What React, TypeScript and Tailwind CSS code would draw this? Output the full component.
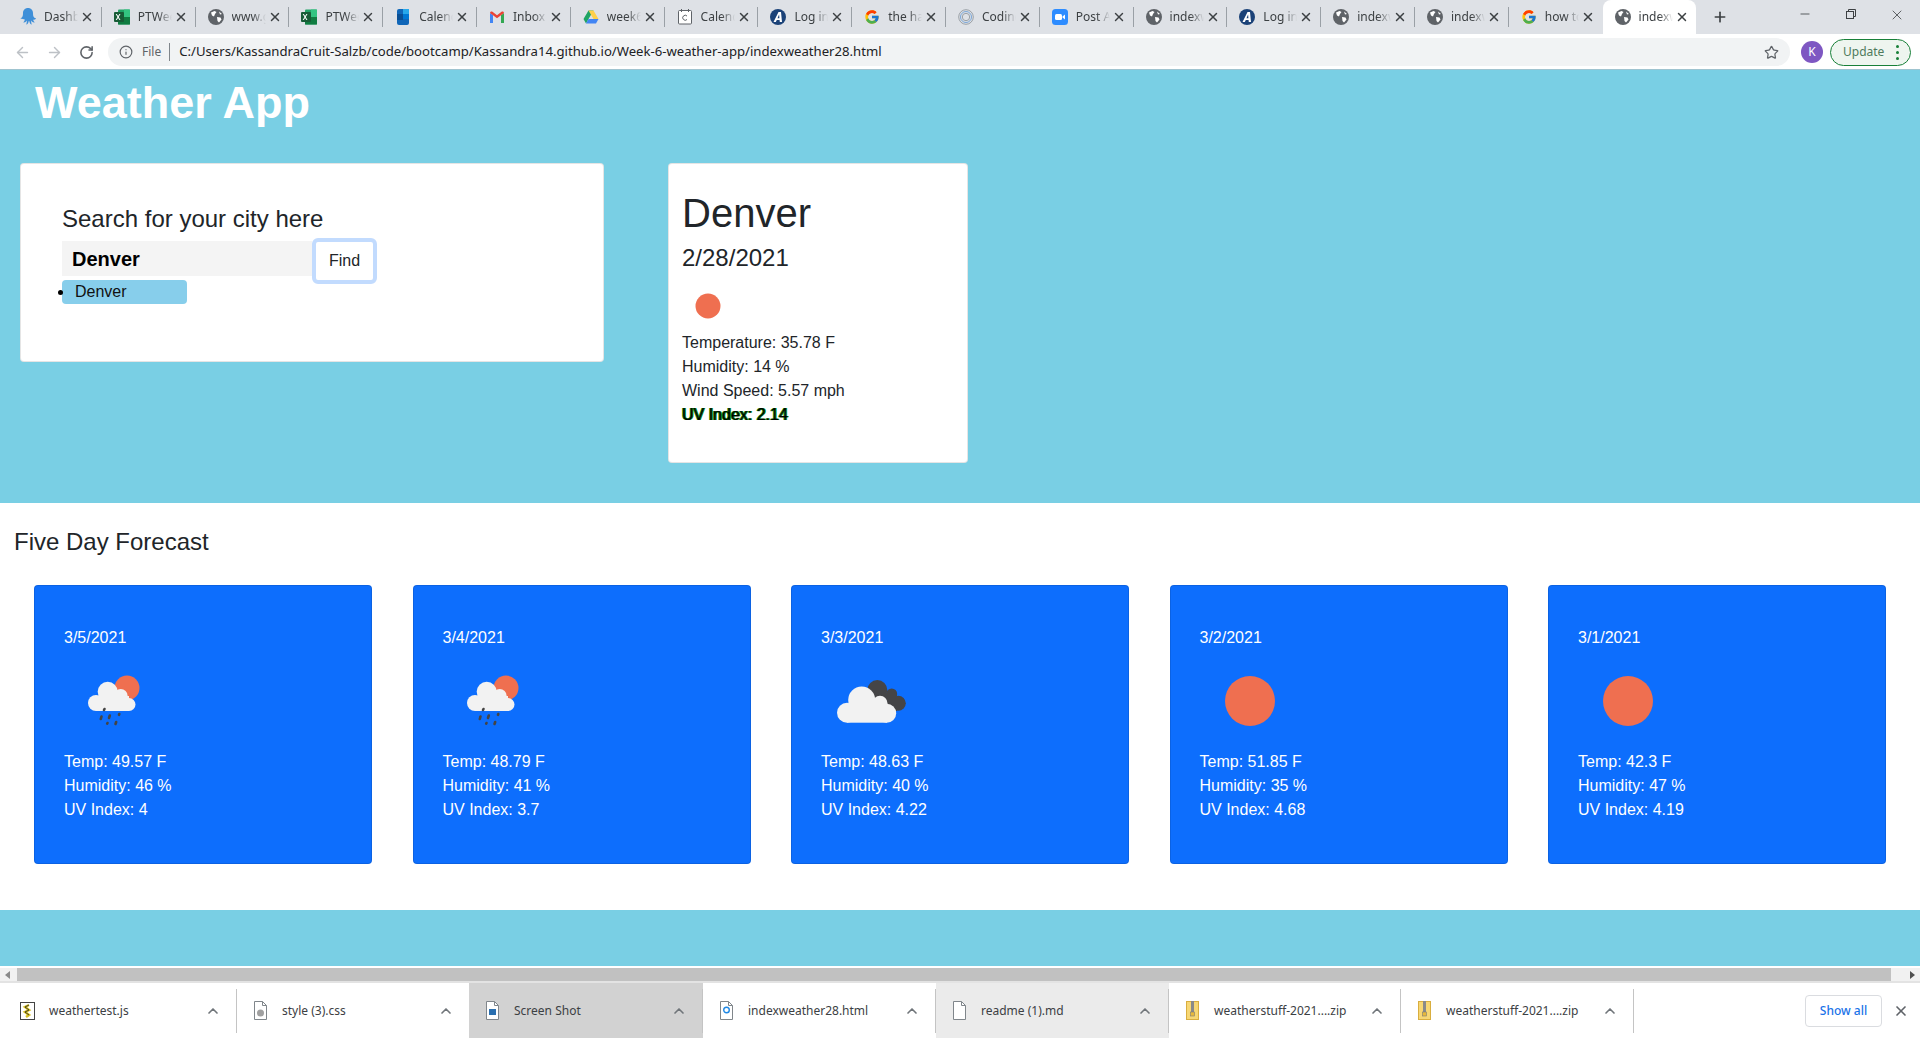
import { FcGoogle } from 'react-icons/fc'
import { ArrowLeft, ArrowRight, ChevronUp, Info, Minus, Plus, RotateCw, Star, X } from 'lucide-react'

function Globe() {
  return (
    <svg width="16" height="16" viewBox="0 0 16 16" aria-hidden="true">
      <circle cx="8" cy="8" r="8" fill="#5f6368" />
      <path d="M3 3.5 6.5 2l2 1-1.5 2-1 2.500-2-1zM9 8l3.500.5 1 2-2.500 3-1.500-1.500zM11 2.500 14 5l-2 .5z" fill="#fff" />
    </svg>
  )
}

function Octo() {
  return (
    <svg width="16" height="18" viewBox="0 0 16 18" aria-hidden="true">
      <path d="M8 0c3 0 5 2.200 5 5 0 2 .3 3.500 1.200 4.500.7.800 1.300.8 1.800.6-.2 1.400-1.500 2-2.800 1.500.2 1.300.8 2.200 1.500 2.800-1.300.4-2.700-.3-3.400-1.800-.2 1.500-.1 2.800.5 4-1.300-.2-2.300-1.500-2.400-3.400h-.8c-.1 1.900-1.100 3.200-2.400 3.400.6-1.200.7-2.500.5-4-.7 1.500-2.100 2.200-3.400 1.800.7-.6 1.300-1.500 1.500-2.800C2 11.100.2 10.500 0 10.100c.5.200 1.100.2 1.800-.6C2.700 8.500 3 7 3 5c0-2.800 2-5 5-5z" fill="#3f8fd8" />
    </svg>
  )
}

function Excel() {
  return (
    <svg width="16" height="16" viewBox="0 0 16 16" aria-hidden="true">
      <rect x="4" y="0.500" width="12" height="15" rx="1" fill="#21a366" />
      <rect x="10" y="0.500" width="6" height="7.500" fill="#33c481" />
      <rect x="4" y="8" width="12" height="7.500" fill="#107c41" />
      <rect x="0" y="3" width="10" height="10" rx="1" fill="#185c37" />
      <path d="m2.800 5 1.300 2.100L5.400 5h1.100L4.700 8l1.800 3H5.400L4.100 8.900 2.800 11H1.700l1.800-3-1.800-3z" fill="#fff" />
    </svg>
  )
}

function Outlook() {
  return (
    <svg width="16" height="16" viewBox="0 0 16 16" aria-hidden="true">
      <rect x="2" y="0" width="12" height="16" rx="2" fill="#1066b8" />
      <rect x="8" y="0" width="6" height="5" fill="#28a8ea" />
      <rect x="8" y="5" width="6" height="5" fill="#0078d4" />
      <rect x="2" y="5" width="6" height="6" fill="#0a4f94" />
    </svg>
  )
}

function Gmail() {
  return (
    <svg width="16" height="16" viewBox="0 0 16 16" aria-hidden="true">
      <path d="M1 14V4l3 2.300V14z" fill="#4285f4" />
      <path d="M12 14V6.300L15 4v10z" fill="#34a853" />
      <path d="M1 4c0-1.500 1.500-2 2.500-1.200L8 6.300l4.500-3.500C13.500 2 15 2.500 15 4l-3 2.300L8 9.300 4 6.300z" fill="#ea4335" />
    </svg>
  )
}

function Drive() {
  return (
    <svg width="16" height="16" viewBox="0 0 16 16" aria-hidden="true">
      <path d="M5.500 1.500h5L5.500 10 3 14.500.5 10z" fill="#1fa463" />
      <path d="M10.500 1.500 15.500 10h-5L8 5.800 5.500 1.500z" fill="#ffd04b" />
      <path d="M5.500 10h10L13 14.500H3z" fill="#4285f4" />
    </svg>
  )
}

function Cal() {
  return (
    <svg width="16" height="16" viewBox="0 0 16 16" aria-hidden="true">
      <rect x="1.500" y="1.500" width="13" height="13.500" rx="1" fill="#fff" stroke="#5f6368" />
      <rect x="4" y="0" width="1" height="3" fill="#5f6368" />
      <rect x="11" y="0" width="1" height="3" fill="#5f6368" />
      <path d="M10 7a2.500 2.500 0 1 0 0 3.500" fill="none" stroke="#5f6368" />
    </svg>
  )
}

function Auth() {
  return (
    <svg width="16" height="16" viewBox="0 0 16 16" aria-hidden="true">
      <circle cx="8" cy="8" r="8" fill="#1b4278" />
      <path d="M8.500 3H11l1 10H9.800l-.2-2H6.800l-1 2H3.500zm.9 6.300L9.100 5.500 7.500 9.300z" fill="#fff" />
    </svg>
  )
}

function Coding() {
  return (
    <svg width="16" height="16" viewBox="0 0 16 16" fill="none" aria-hidden="true">
      <circle cx="8" cy="8" r="7.300" stroke="#9aa0a6" />
      <circle cx="8" cy="8" r="5.500" stroke="#7aa6d8" />
      <circle cx="8" cy="8" r="3.700" stroke="#9aa0a6" />
    </svg>
  )
}

function Zoom() {
  return (
    <svg width="16" height="16" viewBox="0 0 16 16" aria-hidden="true">
      <rect width="16" height="16" rx="3.500" fill="#2d8cff" />
      <rect x="3" y="5" width="7" height="6" rx="1.500" fill="#fff" />
      <path d="m10.500 7.500 2.500-2v5l-2.500-2z" fill="#fff" />
    </svg>
  )
}

const tabs = [
  { icon: <Octo />, title: 'Dashboard' },
  { icon: <Excel />, title: 'PTWeek' },
  { icon: <Globe />, title: 'www.google' },
  { icon: <Excel />, title: 'PTWeek' },
  { icon: <Outlook />, title: 'Calendar' },
  { icon: <Gmail />, title: 'Inbox' },
  { icon: <Drive />, title: 'week6' },
  { icon: <Cal />, title: 'Calendar' },
  { icon: <Auth />, title: 'Log in' },
  { icon: <FcGoogle size={16} />, title: 'the hard' },
  { icon: <Coding />, title: 'Coding' },
  { icon: <Zoom />, title: 'Post A' },
  { icon: <Globe />, title: 'indexw' },
  { icon: <Auth />, title: 'Log in' },
  { icon: <Globe />, title: 'indexw' },
  { icon: <Globe />, title: 'indexw' },
  { icon: <FcGoogle size={16} />, title: 'how to' },
  { icon: <Globe />, title: 'indexw', active: true },
]

function TabStrip() {
  return (
    <div className="flex h-[34px] items-stretch bg-[#dee1e6] pl-[8px]">
      {tabs.map((t, i) => (
        <div
          key={i}
          className={
            t.active
              ? 'flex w-[93.800px] shrink-0 items-center rounded-t-[8px] bg-white pl-[12px]'
              : 'flex w-[93.800px] shrink-0 items-center pl-[12px]'
          }
        >
          <span className="flex w-[16px] shrink-0 justify-center">{t.icon}</span>
          <span className="ml-[8px] w-[34px] shrink-0 overflow-hidden whitespace-nowrap text-[12px] text-[#3c4043] [mask-image:linear-gradient(to_right,#000_60%,transparent)]">
            {t.title}
          </span>
          <X size={14} strokeWidth={2.5} className="ml-[2px] shrink-0 text-[#3c4043]" />
          {!t.active && i < tabs.length - 2 && <span className="ml-auto h-[20px] w-px bg-[#9aa0a6]" />}
        </div>
      ))}
      <div className="ml-[16px] flex items-center">
        <Plus size={16} strokeWidth={2.5} className="text-[#3c4043]" />
      </div>
      <div className="ml-auto flex items-start pt-[7px] text-[#3c4043]">
        <span className="flex w-[46px] justify-center">
          <Minus size={14} strokeWidth={1.400} />
        </span>
        <span className="flex w-[46px] justify-center">
          <svg width="14" height="14" viewBox="0 0 14 14" fill="none" stroke="currentColor" aria-hidden="true">
            <rect x="2.500" y="4.500" width="7" height="7" />
            <path d="M4.500 4.500v-2h7v7h-2" />
          </svg>
        </span>
        <span className="flex w-[46px] justify-center">
          <X size={16} strokeWidth={1.200} />
        </span>
      </div>
    </div>
  )
}

function Toolbar() {
  return (
    <div className="flex h-[36px] items-center border-b border-[#9fc4d0] bg-white pt-px">
      <div className="flex w-[108px] items-center pl-[14px]">
        <ArrowLeft size={17} className="text-[#bdc1c6]" />
        <ArrowRight size={17} className="ml-[15px] text-[#bdc1c6]" />
        <RotateCw size={15} strokeWidth={2.500} className="ml-[16px] text-[#5f6368]" />
      </div>
      <div className="flex h-[28px] w-[1682px] items-center rounded-full bg-[#f1f3f4] pl-[11px] pr-[11px]">
        <Info size={14} className="text-[#5f6368]" />
        <span className="ml-[9px] text-[12px] text-[#5f6368]">File</span>
        <span className="ml-[8px] h-[18px] w-px bg-[#80868b]" />
        <span className="ml-[9px] whitespace-nowrap text-[13.150px] text-[#202124]">
          C:/Users/KassandraCruit-Salzb/code/bootcamp/Kassandra14.github.io/Week-6-weather-app/indexweather28.html
        </span>
        <Star size={15} className="ml-auto text-[#5f6368]" />
      </div>
      <span className="ml-[11px] flex size-[22px] items-center justify-center rounded-full bg-[#7e57c2] text-[12px] text-white">K</span>
      <div className="ml-[7px] flex h-[27px] w-[81px] items-center justify-between rounded-full border border-[#188038] bg-[#eef5ef] pl-[12px] pr-[11px]">
        <span className="text-[12px] text-[#4f7a5c]">Update</span>
        <span className="flex flex-col gap-[3px]">
          <span className="size-[3px] rounded-full bg-[#188038]" />
          <span className="size-[3px] rounded-full bg-[#188038]" />
          <span className="size-[3px] rounded-full bg-[#188038]" />
        </span>
      </div>
    </div>
  )
}

function SunIcon({ size }: { size: number }) {
  return (
    <svg width={size} height={size} viewBox="0 0 100 100" aria-hidden="true">
      <circle cx="50" cy="50" r="25" fill="#ef6f50" />
    </svg>
  )
}

function RainIcon() {
  return (
    <svg width="100" height="100" viewBox="0 0 100 100" aria-hidden="true">
      <circle cx="63" cy="37" r="12.500" fill="#ef6f50" />
      <g fill="#f2f2f2">
        <circle cx="43.700" cy="40.700" r="10" />
        <circle cx="56.700" cy="45" r="7" />
        <circle cx="32" cy="52" r="8" />
        <circle cx="65" cy="53.500" r="6.500" />
        <rect x="32" y="45" width="33" height="15" />
      </g>
      <g stroke="#444" strokeWidth="2.600" strokeLinecap="round">
        <path d="M40.500 58 40 59" />
        <path d="M37.500 65.500 36.800 68" />
        <path d="M45.800 64.500 45 67" />
        <path d="M55.300 63 55 63.800" />
        <path d="M43.500 72 43.200 72.600" />
        <path d="M52.200 71 51.500 73" />
      </g>
    </svg>
  )
}

function CloudIcon() {
  return (
    <svg width="100" height="100" viewBox="0 0 100 100" aria-hidden="true">
      <g fill="#454547">
        <circle cx="56.300" cy="39" r="10" />
        <circle cx="70.700" cy="43" r="5.500" />
        <circle cx="77.300" cy="52.300" r="7.500" />
        <rect x="56" y="42" width="20" height="18" />
      </g>
      <g fill="#f2f2f2">
        <circle cx="40.700" cy="49" r="13.500" />
        <circle cx="59" cy="52.300" r="7.500" />
        <circle cx="26" cy="61.700" r="10" />
        <circle cx="65.700" cy="62.200" r="9.500" />
        <rect x="26" y="55" width="40" height="16.700" />
      </g>
    </svg>
  )
}

const forecast = [
  { date: '3/5/2021', icon: <RainIcon />, temp: '49.57', hum: 46, uv: '4' },
  { date: '3/4/2021', icon: <RainIcon />, temp: '48.79', hum: 41, uv: '3.7' },
  { date: '3/3/2021', icon: <CloudIcon />, temp: '48.63', hum: 40, uv: '4.22' },
  { date: '3/2/2021', icon: <SunIcon size={100} />, temp: '51.85', hum: 35, uv: '4.68' },
  { date: '3/1/2021', icon: <SunIcon size={100} />, temp: '42.3', hum: 47, uv: '4.19' },
]

function Hero() {
  return (
    <section className="h-[433px] bg-[#79cfe4] pl-[20px]">
      <h1 className="pl-[15px] pt-[3px] text-[45px] font-bold leading-[60px] text-white">Weather App</h1>
      <div className="mt-[30px] flex items-start">
        <div className="h-[199px] w-[584px] rounded-[4px] border border-black/10 bg-white pl-[41px] pt-[40px]">
          <p className="text-[24px] leading-[30px] text-[#212529]">Search for your city here</p>
          <div className="mt-[4px] flex items-start">
            <div className="mt-[3px] flex h-[35px] w-[250px] items-center bg-[#f4f4f4] pl-[10px] text-[20px] font-bold text-black">Denver</div>
            <button type="button" className="h-[46px] w-[65px] rounded-[6px] border-[4px] border-[#c2dbfe] bg-white text-[16px] text-[#212529]">
              Find
            </button>
          </div>
          <div className="relative -mt-[4px] h-[24px] w-[125px] rounded-[4px] bg-[#87ceeb] pl-[13px] text-[16px] leading-[24px] text-[#111]">
            <span className="absolute -left-[4px] top-[10px] size-[5px] rounded-full bg-black" />
            Denver
          </div>
        </div>
        <div className="ml-[64px] h-[300px] w-[300px] rounded-[4px] border border-black/10 bg-white pl-[13px]">
          <h2 className="mt-[19px] text-[40px] leading-[60px] text-[#212529]">Denver</h2>
          <p className="text-[24px] leading-[30px] text-[#212529]">2/28/2021</p>
          <div className="ml-px mt-[8px]">
            <SunIcon size={50} />
          </div>
          <div className="text-[16px] leading-[24px] text-[#212529]">
            <p>Temperature: 35.78 F</p>
            <p>Humidity: 14 %</p>
            <p>Wind Speed: 5.57 mph</p>
            <p className="text-black [text-shadow:1px_0_#008000,-1px_0_#008000]">UV Index: 2.14</p>
          </div>
        </div>
      </div>
    </section>
  )
}

function Forecast() {
  return (
    <section className="h-[407px] bg-white">
      <h3 className="pl-[14px] pt-[24px] text-[24px] leading-[30px] text-[#212529]">Five Day Forecast</h3>
      <div className="mt-[28px] flex gap-[40.500px] pl-[34px]">
        {forecast.map((d) => (
          <div key={d.date} className="h-[279px] w-[338px] rounded-[4px] border border-black/10 bg-[#0d6efd] pl-[29px] pt-[40px] text-[16px] leading-[24px] text-white">
            <p>{d.date}</p>
            <div className="mt-px">{d.icon}</div>
            <p className="mt-[-1px]">Temp: {d.temp} F</p>
            <p>Humidity: {d.hum} %</p>
            <p>UV Index: {d.uv}</p>
          </div>
        ))}
      </div>
    </section>
  )
}

function JsIcon() {
  return (
    <svg width="15" height="18" viewBox="0 0 15 18" aria-hidden="true">
      <rect x="0.500" y="0.500" width="14" height="17" fill="#fff" stroke="#444" />
      <path d="M9 3 5 5l4 3-4 2 4 3-3 2" fill="none" stroke="#d8c020" strokeWidth="2.500" />
      <path d="M9 3 5 5l4 3-4 2 4 3" fill="none" stroke="#222" strokeWidth=".8" />
    </svg>
  )
}

function FileIcon({ children }: { children?: React.ReactNode }) {
  return (
    <svg width="13" height="19" viewBox="0 0 13 19" aria-hidden="true">
      <path d="M.500.500h8l4 4v14H.500z" fill="#fff" stroke="#80868b" />
      <path d="M8.500.500v4h4" fill="none" stroke="#80868b" />
      {children}
    </svg>
  )
}

function ZipIcon() {
  return (
    <svg width="13" height="19" viewBox="0 0 13 19" aria-hidden="true">
      <rect x="0.500" y="0.500" width="12" height="18" fill="#f7d774" stroke="#d9ae3f" />
      <rect x="5" y="0" width="3" height="12" fill="#8a8a8a" />
      <rect x="4.500" y="11" width="4" height="4" fill="#e8b93a" stroke="#7a7a7a" strokeWidth=".6" />
    </svg>
  )
}

const downloads = [
  { name: 'weathertest.js', icon: <JsIcon />, w: 237, bg: 'bg-white', sep: true },
  {
    name: 'style (3).css',
    icon: (
      <FileIcon>
        <circle cx="6.500" cy="12" r="3.500" fill="#a0a0a0" />
      </FileIcon>
    ),
    w: 232,
    bg: 'bg-white',
    sep: false,
  },
  {
    name: 'Screen Shot',
    icon: (
      <FileIcon>
        <rect x="3" y="8" width="7" height="6" fill="#2a6fb0" />
      </FileIcon>
    ),
    w: 234,
    bg: 'bg-[#d2d2d2]',
    sep: true,
  },
  {
    name: 'indexweather28.html',
    icon: (
      <FileIcon>
        <circle cx="6.500" cy="9" r="2.800" fill="none" stroke="#1e88e5" strokeWidth="1.400" />
      </FileIcon>
    ),
    w: 233,
    bg: 'bg-white',
    sep: true,
  },
  { name: 'readme (1).md', icon: <FileIcon />, w: 233, bg: 'bg-[#ebebeb]', sep: true },
  { name: 'weatherstuff-2021....zip', icon: <ZipIcon />, w: 232, bg: 'bg-white', sep: true },
  { name: 'weatherstuff-2021....zip', icon: <ZipIcon />, w: 233, bg: 'bg-white', sep: true },
]

function DownloadBar() {
  return (
    <div className="flex h-[57px] items-stretch border-t-2 border-[#e3e3e3] bg-white">
      {downloads.map((d, i) => (
        <div key={i} className={`flex shrink-0 items-center ${d.bg}`} style={{ width: d.w }}>
          <span className={i === 0 ? 'ml-[20px] flex w-[29px] shrink-0' : 'ml-[17px] flex w-[28px] shrink-0'}>{d.icon}</span>
          <span className="whitespace-nowrap text-[12px] text-[#3c4043]">{d.name}</span>
          <ChevronUp size={16} strokeWidth={2.500} className="ml-auto mr-[15px] shrink-0 text-[#70757a]" />
          {d.sep && <span className="h-[44px] w-px shrink-0 bg-[#c4c4c4]" />}
        </div>
      ))}
      <div className="ml-auto flex items-center pr-[11px]">
        <button type="button" className="h-[32px] w-[77px] rounded-[4px] border border-[#dadce0] bg-white text-[12px] font-medium text-[#1a73e8]">
          Show all
        </button>
        <X size={16} strokeWidth={2.500} className="ml-[11px] text-[#5f6368]" />
      </div>
    </div>
  )
}

function Scrollbar() {
  return (
    <div className="flex h-[15px] items-center border-t-2 border-white bg-[#f1f1f1]">
      <span className="ml-[5px] h-0 w-0 border-y-[4px] border-r-[5px] border-y-transparent border-r-[#8a8a8a]" />
      <span className="ml-[7px] h-[13px] w-[1874px] bg-[#c1c1c1]" />
      <span className="ml-auto mr-[5px] h-0 w-0 border-y-[4px] border-l-[5px] border-y-transparent border-l-[#505050]" />
    </div>
  )
}

export default function App() {
  return (
    <div className="flex h-[1040px] w-[1920px] flex-col overflow-hidden bg-white font-['Liberation_Sans',Arial,sans-serif]">
      <div className="font-['Noto_Sans',sans-serif]">
        <TabStrip />
        <Toolbar />
      </div>
      <Hero />
      <Forecast />
      <div className="h-[56px] bg-[#79cfe4]" />
      <Scrollbar />
      <div className="font-['Noto_Sans',sans-serif]">
        <DownloadBar />
      </div>
    </div>
  )
}
